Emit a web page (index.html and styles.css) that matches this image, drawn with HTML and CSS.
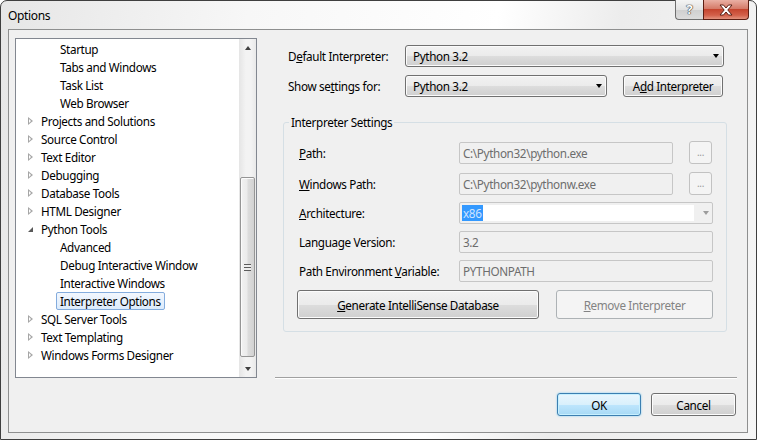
FILE: index.html
```html
<!DOCTYPE html>
<html>
<head>
<meta charset="utf-8">
<link rel="stylesheet" href="styles.css">
</head>
<body>
<div class="window">
  <div class="titlebar">
    <span class="title">Options</span>
    <div class="caption">
      <div class="cap-help">?</div>
      <div class="cap-close">
        <svg width="16" height="12" viewBox="0 0 16 12"><path d="M2 1h3.5L8 4 10.5 1H14L9.8 6 14 11h-3.5L8 8l-2.5 3H2l4.2-5z" fill="#fff" stroke="#5a2016" stroke-width="1" stroke-linejoin="round"/></svg>
      </div>
    </div>
  </div>
  <div class="client">
    <div class="main">
      <div class="tree">
        <ul class="items">
          <li class="lvl1"><span class="txt">Startup</span></li>
          <li class="lvl1"><span class="txt">Tabs and Windows</span></li>
          <li class="lvl1"><span class="txt">Task List</span></li>
          <li class="lvl1"><span class="txt">Web Browser</span></li>
          <li class="lvl0"><span class="exp closed"></span><span class="txt">Projects and Solutions</span></li>
          <li class="lvl0"><span class="exp closed"></span><span class="txt">Source Control</span></li>
          <li class="lvl0"><span class="exp closed"></span><span class="txt">Text Editor</span></li>
          <li class="lvl0"><span class="exp closed"></span><span class="txt">Debugging</span></li>
          <li class="lvl0"><span class="exp closed"></span><span class="txt">Database Tools</span></li>
          <li class="lvl0"><span class="exp closed"></span><span class="txt">HTML Designer</span></li>
          <li class="lvl0"><span class="exp open"></span><span class="txt">Python Tools</span></li>
          <li class="lvl1"><span class="txt">Advanced</span></li>
          <li class="lvl1"><span class="txt">Debug Interactive Window</span></li>
          <li class="lvl1"><span class="txt">Interactive Windows</span></li>
          <li class="lvl1"><span class="txt sel">Interpreter Options</span></li>
          <li class="lvl0"><span class="exp closed"></span><span class="txt">SQL Server Tools</span></li>
          <li class="lvl0"><span class="exp closed"></span><span class="txt">Text Templating</span></li>
          <li class="lvl0"><span class="exp closed"></span><span class="txt">Windows Forms Designer</span></li>
        </ul>
        <div class="vscroll">
          <div class="sb-btn"><span class="tri-up"></span></div>
          <div class="sb-track">
            <div class="sb-thumb"><span class="grip"></span></div>
          </div>
          <div class="sb-btn"><span class="tri-down"></span></div>
        </div>
      </div>
      <div class="pane">
        <div class="row r1">
          <label class="lbl top-lbl">D<u>e</u>fault Interpreter:</label>
          <div class="combo w-long"><span>Python 3.2</span><span class="arrow"></span></div>
        </div>
        <div class="row r2">
          <label class="lbl top-lbl">Show se<u>t</u>tings for:</label>
          <div class="combo w-mid"><span>Python 3.2</span><span class="arrow"></span></div>
          <div class="btn add-btn">A<u>d</u>d Interpreter</div>
        </div>
        <div class="group">
          <span class="legend">Interpreter Settings</span>
          <div class="frow f-path">
            <label class="lbl g-lbl"><u>P</u>ath:</label>
            <div class="tbox w-path">C:\Python32\python.exe</div>
            <div class="btn dots">...</div>
          </div>
          <div class="frow f-wpath">
            <label class="lbl g-lbl"><u>W</u>indows Path:</label>
            <div class="tbox w-path">C:\Python32\pythonw.exe</div>
            <div class="btn dots">...</div>
          </div>
          <div class="frow f-arch">
            <label class="lbl g-lbl"><u>A</u>rchitecture:</label>
            <div class="arch w-full">
              <div class="arch-edit"><span class="hl">x86</span></div>
              <span class="arrow gray"></span>
            </div>
          </div>
          <div class="frow f-lang">
            <label class="lbl g-lbl">Language Version:</label>
            <div class="tbox w-full">3.2</div>
          </div>
          <div class="frow f-env">
            <label class="lbl g-lbl">Path Environment <u>V</u>ariable:</label>
            <div class="tbox w-full">PYTHONPATH</div>
          </div>
          <div class="brow">
            <div class="btn big gen"><u>G</u>enerate IntelliSense Database</div>
            <div class="btn big disabled rem"><u>R</u>emove Interpreter</div>
          </div>
        </div>
        <div class="sep"></div>
      </div>
    </div>
    <div class="footer">
      <div class="btn ok">OK</div>
      <div class="btn cancel">Cancel</div>
    </div>
  </div>
</div>
</body>
</html>
```
FILE: styles.css
```css
* { box-sizing: border-box; }
html, body { margin: 0; padding: 0; }
body {
  width: 757px;
  height: 440px;
  overflow: hidden;
  background: #ffffff;
  font-family: "Noto Sans", "Open Sans", sans-serif;
  font-size: 11.7px;
  letter-spacing: -0.35px;
  color: #000;
}
u { text-decoration: underline; text-underline-offset: 1px; }

.window {
  position: relative;
  width: 757px;
  height: 440px;
  border: 1px solid #3f3f3f;
  border-radius: 7px 7px 0 0;
  background: linear-gradient(100deg, #e6e6e6 0%, #f7f7f7 30%, #ffffff 60%, #ececec 75%, #f6f6f6 100%);
  padding: 0 8px 6px 7px;
  display: flex;
  flex-direction: column;
}

.titlebar {
  height: 28px;
  display: flex;
  align-items: center;
  padding-top: 1px;
}
.title { font-size: 12px; color: #000; }

.caption {
  position: absolute;
  top: -1px;
  right: 7px;
  display: flex;
  height: 20px;
}
.cap-help {
  width: 28px;
  height: 20px;
  border: 1px solid #6e6e6e;
  border-top: none;
  border-right: none;
  border-radius: 0 0 0 4px;
  background: linear-gradient(#f4f4f4, #e2e2e2 50%, #cfcfcf 51%, #dcdcdc);
  color: #fff;
  font-weight: bold;
  font-size: 13px;
  line-height: 19px;
  text-align: center;
  text-shadow: 0 0 1px #333, 0 0 1px #333, 0 0 1px #333;
}
.cap-close {
  width: 46px;
  height: 20px;
  border: 1px solid #5c1d12;
  border-top: none;
  border-radius: 0 0 4px 0;
  background: linear-gradient(#eab0a4, #d57b69 45%, #c5452f 50%, #d3604a 80%, #e3937f);
  display: flex;
  align-items: center;
  justify-content: center;
}

.client {
  flex: 1;
  border: 1px solid #8e8f8f;
  background: #f0f0f0;
  display: flex;
  flex-direction: column;
}

.main {
  display: flex;
  padding: 8px 0 0 6px;
  height: 349px;
}

/* tree */
.tree {
  width: 242px;
  height: 340px;
  border: 1px solid #828790;
  background: #fff;
  display: flex;
}
.items {
  list-style: none;
  margin: 0;
  padding: 1px 0 0 0;
  flex: 1;
}
.items li {
  height: 18px;
  display: flex;
  align-items: center;
  white-space: nowrap;
}
.lvl0 { padding-left: 11px; }
.lvl1 { padding-left: 40px; }
.exp { width: 13px; height: 18px; position: relative; flex: none; }
.exp.closed::before {
  content: "";
  position: absolute;
  left: 1px;
  top: 5px;
  width: 0;
  height: 0;
  border-top: 4.5px solid transparent;
  border-bottom: 4.5px solid transparent;
  border-left: 5px solid #a6a6a6;
}
.exp.closed::after {
  content: "";
  position: absolute;
  left: 2px;
  top: 7px;
  width: 0;
  height: 0;
  border-top: 2.5px solid transparent;
  border-bottom: 2.5px solid transparent;
  border-left: 2.8px solid #fff;
}
.exp.open::before {
  content: "";
  position: absolute;
  left: 1px;
  top: 7px;
  width: 0;
  height: 0;
  border-left: 5px solid transparent;
  border-bottom: 5px solid #595959;
}
.txt {
  padding: 0 3px 0 3px;
  border: 1px solid transparent;
  line-height: 16px;
  height: 18px;
}
.lvl0 .txt { padding-left: 0; }
.txt.sel {
  border: 1px solid #84acdd;
  border-radius: 2px;
  background: linear-gradient(#f2f7fe, #dcebfc);
}

/* scrollbar */
.vscroll {
  width: 17px;
  display: flex;
  flex-direction: column;
  background: linear-gradient(90deg, #e5e5e5, #f3f3f3 40%, #f3f3f3 70%, #e9e9e9);
}
.sb-btn {
  height: 17px;
  display: flex;
  align-items: center;
  justify-content: center;
}
.tri-up, .tri-down {
  width: 0; height: 0;
  border-left: 3.5px solid transparent;
  border-right: 3.5px solid transparent;
}
.tri-up { border-bottom: 4px solid #404040; margin-top: 1px; }
.tri-down { border-top: 4px solid #404040; }
.sb-track {
  flex: 1;
  padding: 121px 1px 2px 1px;
}
.sb-thumb {
  height: 180px;
  border: 1px solid #959595;
  border-radius: 2px;
  background: linear-gradient(90deg, #f2f2f2, #ebebeb 45%, #dcdcdc 55%, #d2d2d2);
  box-shadow: inset 1px 1px 0 #fbfbfb;
  display: flex;
  align-items: center;
  justify-content: center;
}
.grip {
  width: 7px;
  height: 7px;
  background: repeating-linear-gradient(#5c5c5c 0 1px, #eeeeee 1px 3px);
}

/* right pane */
.pane {
  margin-left: 18px;
  width: 462px;
  display: flex;
  flex-direction: column;
}
.row {
  display: flex;
  align-items: center;
  height: 22px;
  padding-left: 13px;
}
.r1 { margin-top: 7px; }
.r2 { margin-top: 8px; }
.lbl { white-space: nowrap; }
.top-lbl { width: 117px; }

.combo {
  height: 22px;
  border: 1px solid #707070;
  border-radius: 3px;
  background: linear-gradient(#f2f2f2, #ebebeb 50%, #dddddd 51%, #cfcfcf);
  box-shadow: inset 0 0 0 1px #fbfbfb;
  display: flex;
  align-items: center;
  justify-content: space-between;
  padding: 0 3px 0 7px;
}
.w-long { width: 319px; }
.w-mid { width: 202px; }
.arrow {
  width: 0; height: 0;
  border-left: 3.5px solid transparent;
  border-right: 3.5px solid transparent;
  border-top: 4px solid #000;
  margin-right: 1px;
}
.arrow.gray { border-top-color: #9c9c9c; }

.btn {
  height: 22px;
  border: 1px solid #707070;
  border-radius: 3px;
  background: linear-gradient(#f2f2f2, #ebebeb 50%, #dddddd 51%, #cfcfcf);
  box-shadow: inset 0 0 0 1px #fcfcfc;
  display: flex;
  align-items: center;
  justify-content: center;
  white-space: nowrap;
}
.add-btn { width: 100px; margin-left: 16px; }

/* group */
.group {
  margin-top: 25px;
  margin-left: 8px;
  width: 444px;
  height: 210px;
  border: 1px solid #d5dfe5;
  border-radius: 3px;
  display: flex;
  flex-direction: column;
  align-items: flex-start;
}
.legend {
  margin: -9px 0 0 5px;
  padding: 0 2px;
  line-height: 16px;
  background: #f0f0f0;
}
.frow {
  display: flex;
  align-items: center;
  padding-left: 15px;
}
.f-path { margin-top: 11px; height: 23px; }
.f-wpath { margin-top: 8px; height: 23px; }
.f-arch { margin-top: 7px; height: 22px; }
.f-lang { margin-top: 7px; height: 22px; }
.f-env { margin-top: 7px; height: 22px; }
.g-lbl { width: 160px; }
.tbox {
  height: 22px;
  border: 1px solid #c6c6c6;
  border-radius: 2px;
  background: #f0f0f0;
  color: #6d6d6d;
  padding-left: 3px;
  display: flex;
  align-items: center;
  white-space: nowrap;
}
.w-path { width: 214px; }
.w-full { width: 254px; }
.btn.dots {
  width: 23px;
  height: 23px;
  margin-left: 16px;
  border-color: #c2c2c2;
  background: #f4f4f4;
  box-shadow: none;
  color: #9a9a9a;
  font-size: 10px;
  padding-bottom: 2px;
}
.arch {
  height: 22px;
  border: 1px solid #c6c6c6;
  border-radius: 2px;
  background: #f0f0f0;
  display: flex;
  align-items: center;
  padding: 2px;
}
.arch-edit {
  width: 233px;
  height: 16px;
  background: #ffffff;
  display: flex;
  align-items: center;
}
.hl {
  background: #3399ff;
  color: #cfe4ff;
  line-height: 16px;
  padding: 0 1px 0 1px;
}
.arch .arrow { margin-left: 9px; }

.brow {
  display: flex;
  margin-top: 8px;
  margin-left: 13px;
}
.btn.big { height: 29px; }
.gen { width: 242px; }
.rem { width: 157px; margin-left: 17px; }
.btn.disabled {
  border-color: #adb2b5;
  background: #f4f4f4;
  box-shadow: none;
  color: #838383;
}

.sep {
  margin-top: auto;
  height: 2px;
  border-top: 1px solid #a0a0a0;
  border-bottom: 1px solid #ffffff;
}

/* footer */
.footer {
  display: flex;
  justify-content: flex-end;
  padding-right: 11px;
  margin-top: 14px;
}
.ok {
  width: 84px;
  height: 23px;
  border-color: #3c7fb1;
  background: linear-gradient(#eaf6fd, #d9f0fc 50%, #bee6fd 51%, #a7d9f5);
  box-shadow: inset 0 0 0 1px #c7f0ff, 0 0 2px #6ec6f2;
}
.cancel { width: 85px; height: 23px; margin-left: 10px; }
```
